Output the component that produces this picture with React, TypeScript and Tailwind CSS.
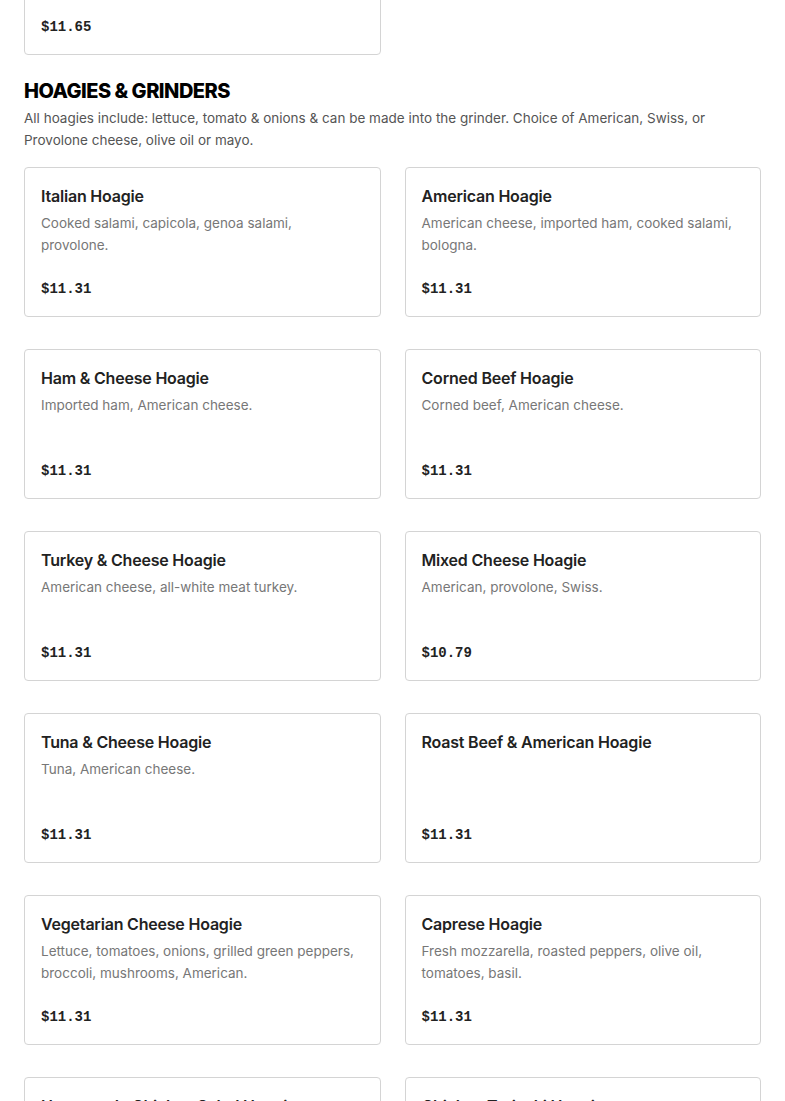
import React from "react";

type Item = { name: string; desc?: string; price: string };

const hoagies: Item[] = [
  { name: "Italian Hoagie", desc: "Cooked salami, capicola, genoa salami, provolone.", price: "$11.31" },
  { name: "American Hoagie", desc: "American cheese, imported ham, cooked salami, bologna.", price: "$11.31" },
  { name: "Ham & Cheese Hoagie", desc: "Imported ham, American cheese.", price: "$11.31" },
  { name: "Corned Beef Hoagie", desc: "Corned beef, American cheese.", price: "$11.31" },
  { name: "Turkey & Cheese Hoagie", desc: "American cheese, all-white meat turkey.", price: "$11.31" },
  { name: "Mixed Cheese Hoagie", desc: "American, provolone, Swiss.", price: "$10.79" },
  { name: "Tuna & Cheese Hoagie", desc: "Tuna, American cheese.", price: "$11.31" },
  { name: "Roast Beef & American Hoagie", price: "$11.31" },
  { name: "Vegetarian Cheese Hoagie", desc: "Lettuce, tomatoes, onions, grilled green peppers, broccoli, mushrooms, American.", price: "$11.31" },
  { name: "Caprese Hoagie", desc: "Fresh mozzarella, roasted peppers, olive oil, tomatoes, basil.", price: "$11.31" },
  { name: "Homemade Chicken Salad Hoagie", desc: "Homemade chicken salad, lettuce, tomatoes.", price: "$11.31" },
  { name: "Chicken Teriyaki Hoagie", desc: "Grilled chicken, teriyaki sauce, provolone.", price: "$11.31" },
];

function MenuCard({ item }: { item: Item }) {
  return (
    <div className="flex h-[150px] flex-col rounded border border-[#d4d4d4] bg-white px-4 pt-4 pb-[15px]">
      <h3 className="text-[16px] leading-6 font-semibold tracking-[-0.2px] text-[#222]">{item.name}</h3>
      {item.desc && (
        <p className="mt-1 pr-2 text-[13.5px] leading-[22px] text-[#777]">{item.desc}</p>
      )}
      <div className="mt-auto font-['Liberation_Mono',monospace] text-[14px] leading-6 font-bold text-[#222]">
        {item.price}
      </div>
    </div>
  );
}

export default function App() {
  return (
    <div className="min-h-screen overflow-hidden bg-white font-['Inter',sans-serif]">
      <div className="-mt-[95px] px-6 pb-10">
        <div className="grid grid-cols-2 gap-x-6 gap-y-8">
          <MenuCard item={{ name: "Cheesesteak Hoagie", desc: "Steak, American cheese, fried onions.", price: "$11.65" }} />
        </div>

        <section className="mt-[22px]">
          <h2 className="text-[20px] leading-7 font-extrabold tracking-tight text-black uppercase">
            Hoagies &amp; Grinders
          </h2>
          <p className="mt-0.5 text-[13.5px] leading-[22px] text-[#555]">
            All hoagies include: lettuce, tomato &amp; onions &amp; can be made into the grinder. Choice of American,
            Swiss, or Provolone cheese, olive oil or mayo.
          </p>
          <div className="mt-4 grid grid-cols-2 gap-x-6 gap-y-8">
            {hoagies.map((h) => (
              <MenuCard key={h.name} item={h} />
            ))}
          </div>
        </section>
      </div>
    </div>
  );
}
